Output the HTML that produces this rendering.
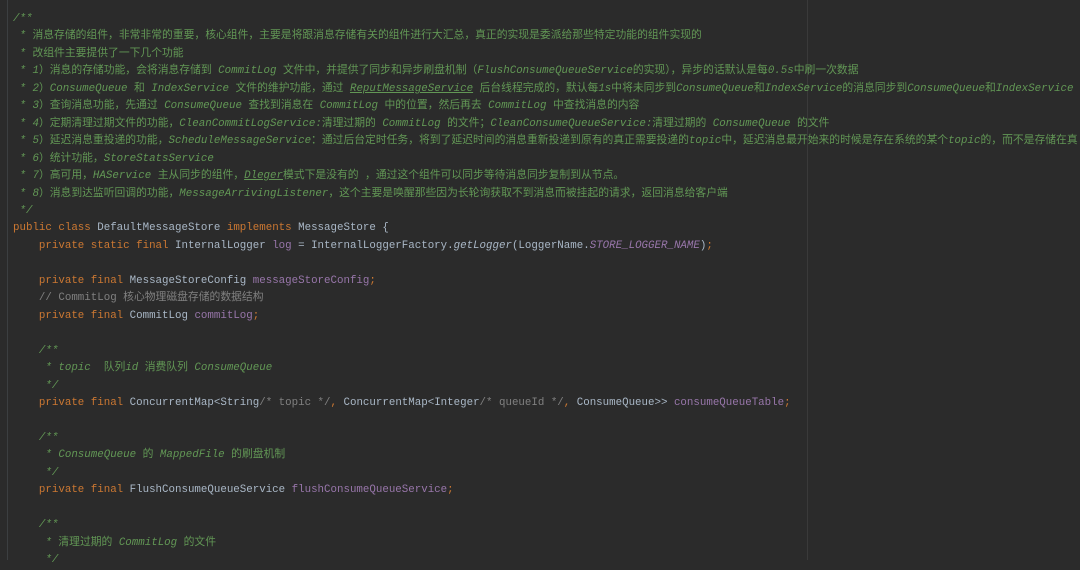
<!DOCTYPE html>
<html><head><meta charset="utf-8"><style>
html,body{margin:0;padding:0;width:1080px;height:560px;overflow:hidden;background:#2b2b2b;}
#g{position:absolute;left:7px;top:0;width:1px;height:560px;background:#3c3f41;}
#m{position:absolute;left:807px;top:0;width:1px;height:560px;background:#3a3a3a;}
pre{position:absolute;left:13px;top:11px;margin:0;font-family:"Liberation Mono","Noto Sans CJK SC",monospace;font-size:10.8px;line-height:17.45px;color:#a9b7c6;white-space:pre;}
.c{color:#629755;}
.i{font-style:italic;}
.n{font-style:normal;}
.k{color:#cc7832;}
.f{color:#9876aa;}
.fi{color:#9876aa;font-style:italic;}
.lc{color:#808080;}
.u{text-decoration:underline;}
.m{font-style:italic;}
</style></head><body>
<div id="g"></div><div id="m"></div>
<pre><span class="c"><span class="i">/**</span>
 <span class="i">*</span> 消息存储的组件，非常非常的重要，核心组件，主要是将跟消息存储有关的组件进行大汇总，真正的实现是委派给那些特定功能的组件实现的
 <span class="i">*</span> 改组件主要提供了一下几个功能
 <span class="i">* 1</span>）消息的存储功能，会将消息存储到 <span class="i">CommitLog</span> 文件中，并提供了同步和异步刷盘机制（<span class="i">FlushConsumeQueueService</span>的实现），异步的话默认是每<span class="i">0.5s</span>中刷一次数据
 <span class="i">* 2</span>）<span class="i">ConsumeQueue</span> 和 <span class="i">IndexService</span> 文件的维护功能，通过 <span class="i u">ReputMessageService</span> 后台线程完成的，默认每<span class="i">1s</span>中将未同步到<span class="i">ConsumeQueue</span>和<span class="i">IndexService</span>的消息同步到<span class="i">ConsumeQueue</span>和<span class="i">IndexService</span>
 <span class="i">* 3</span>）查询消息功能，先通过 <span class="i">ConsumeQueue</span> 查找到消息在 <span class="i">CommitLog</span> 中的位置，然后再去 <span class="i">CommitLog</span> 中查找消息的内容
 <span class="i">* 4</span>）定期清理过期文件的功能，<span class="i">CleanCommitLogService:</span>清理过期的 <span class="i">CommitLog</span> 的文件；<span class="i">CleanConsumeQueueService:</span>清理过期的 <span class="i">ConsumeQueue</span> 的文件
 <span class="i">* 5</span>）延迟消息重投递的功能，<span class="i">ScheduleMessageService</span>：通过后台定时任务，将到了延迟时间的消息重新投递到原有的真正需要投递的<span class="i">topic</span>中，延迟消息最开始来的时候是存在系统的某个<span class="i">topic</span>的，而不是存储在真
 <span class="i">* 6</span>）统计功能，<span class="i">StoreStatsService</span>
 <span class="i">* 7</span>）高可用，<span class="i">HAService</span> 主从同步的组件，<span class="i u">Dleger</span>模式下是没有的 ，通过这个组件可以同步等待消息同步复制到从节点。
 <span class="i">* 8</span>）消息到达监听回调的功能，<span class="i">MessageArrivingListener</span>，这个主要是唤醒那些因为长轮询获取不到消息而被挂起的请求，返回消息给客户端
 <span class="i">*/</span></span>
<span class="k">public class</span> DefaultMessageStore <span class="k">implements</span> MessageStore {
    <span class="k">private static final</span> InternalLogger <span class="f">log</span> = InternalLoggerFactory.<span class="m">getLogger</span>(LoggerName.<span class="fi">STORE_LOGGER_NAME</span>)<span class="k">;</span>

    <span class="k">private final</span> MessageStoreConfig <span class="f">messageStoreConfig</span><span class="k">;</span>
    <span class="lc">// CommitLog 核心物理磁盘存储的数据结构</span>
    <span class="k">private final</span> CommitLog <span class="f">commitLog</span><span class="k">;</span>

<span class="c i">    /**
     * topic  <span class="n">队列</span>id <span class="n">消费队列</span> ConsumeQueue
     */</span>
    <span class="k">private final</span> ConcurrentMap&lt;String<span class="lc">/* topic */</span><span class="k">,</span> ConcurrentMap&lt;Integer<span class="lc">/* queueId */</span><span class="k">,</span> ConsumeQueue&gt;&gt; <span class="f">consumeQueueTable</span><span class="k">;</span>

<span class="c i">    /**
     * ConsumeQueue <span class="n">的</span> MappedFile <span class="n">的刷盘机制</span>
     */</span>
    <span class="k">private final</span> FlushConsumeQueueService <span class="f">flushConsumeQueueService</span><span class="k">;</span>

<span class="c i">    /**
     * <span class="n">清理过期的</span> CommitLog <span class="n">的文件</span>
     */</span>
</pre>
</body></html>
